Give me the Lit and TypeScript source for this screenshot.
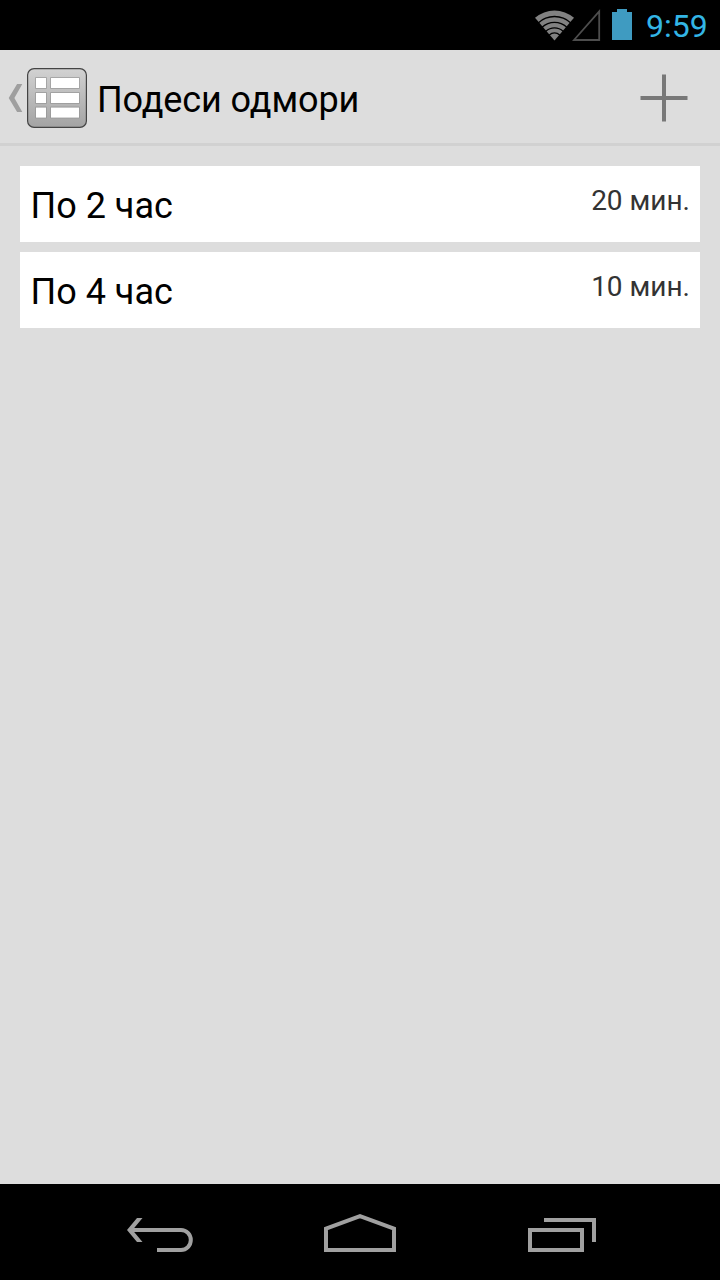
import { LitElement, html, css, svg } from "lit";
import { customElement, property } from "lit/decorators.js";

@customElement("status-bar")
class StatusBar extends LitElement {
  static styles = css`
    :host { display: flex; height: 50px; background: #000; justify-content: flex-end; }
    .icons { display: block; flex: none; }
    .clock { width: 88px; box-sizing: border-box; padding-left: 14px; font-size: 32px; line-height: 53px; color: #33b5e5; white-space: nowrap; }
  `;
  render() {
    const gaps = [24, 18.2, 12.7, 7.6];
    return html`
      <svg class="icons" width="102" height="50" viewBox="530 0 102 50">
        <path d="M554.5 40.5 L535 17.8 A30 30 0 0 1 574 17.8 Z" fill="#818181" />
        ${gaps.map((r) => svg`<path d="M${554.5 - r * 0.68} ${40.5 - r * 0.733} A${r} ${r} 0 0 1 ${554.5 + r * 0.68} ${40.5 - r * 0.733}" fill="none" stroke="#000" stroke-width="1.3" />`)}
        <path d="M574 40 L599.2 11.5 V40 Z" fill="none" stroke="#4d4d4d" stroke-width="1.8" />
        <path d="M612 12 H617 V9 H627 V12 H632 V40 H612 Z" fill="#3f9bc1" />
      </svg>
      <span class="clock">9:59</span>
    `;
  }
}

@customElement("action-bar")
class ActionBar extends LitElement {
  @property() heading = "";
  static styles = css`
    :host { display: flex; height: 96px; box-sizing: border-box; border-bottom: 3px solid #d1d1d1; background: #ddd; }
    svg { display: block; flex: none; }
    .heading { flex: 1; margin: 0; padding-left: 7px; font-weight: 400; font-size: 36px; line-height: 100px; height: 93px; letter-spacing: -0.1px; color: #000; white-space: nowrap; }
  `;
  render() {
    return html`
      <svg width="90" height="93" viewBox="0 50 90 93">
        <defs>
          <linearGradient id="g" x1="0" y1="0" x2="0" y2="1">
            <stop offset="0" stop-color="#d2d2d2" />
            <stop offset="1" stop-color="#a3a3a3" />
          </linearGradient>
        </defs>
        <path d="M17.1 84 H22.3 L14.4 98 L22.3 112 H17.1 L8.7 98 Z" fill="#9f9f9f" />
        <rect x="27.6" y="68.6" width="58.8" height="58.8" rx="6.5" fill="url(#g)" stroke="#444" stroke-width="1.2" />
        ${[77, 92, 106.6].map((y) => svg`
          <rect x="35" y=${y} width="12" height="12" rx="1" fill="#8f8f8f" fill-opacity=".6" />
          <rect x="50" y=${y} width="30" height="12" rx="1" fill="#8f8f8f" fill-opacity=".6" />
          <rect x="36" y=${y + 1} width="10" height="10" fill="#fff" />
          <rect x="51" y=${y + 1} width="28" height="10" fill="#fff" />`)}
      </svg>
      <h1 class="heading">${this.heading}</h1>
      <svg width="112" height="93" viewBox="608 50 112 93">
        <path d="M640.5 98 H687.5 M664 74.5 V121.5" stroke="#787878" stroke-width="4" />
      </svg>
    `;
  }
}

@customElement("break-row")
class BreakRow extends LitElement {
  @property() label = "";
  @property() duration = "";
  static styles = css`
    :host { display: flex; justify-content: space-between; height: 76px; box-sizing: border-box; padding: 0 10px; background: #fff; white-space: nowrap; }
    .label { font-size: 36px; line-height: 80px; padding-left: 0.5px; color: #000; }
    .duration { font-size: 28px; line-height: 70px; color: #333; }
  `;
  render() {
    return html`<span class="label">${this.label}</span><span class="duration">${this.duration}</span>`;
  }
}

@customElement("nav-bar")
class NavBar extends LitElement {
  static styles = css`
    :host { display: block; height: 96px; background: #000; }
    svg { display: block; }
  `;
  render() {
    return html`
      <svg width="720" height="96" viewBox="0 1184 720 96" fill="none" stroke="#a0a0a0" stroke-width="4">
        <path d="M131 1230 H181 A9.8 10 0 0 1 181 1250 H157" />
        <path d="M137 1218 H142.5 L132.5 1230 L142.5 1242 H137 L127 1230 Z" fill="#a0a0a0" stroke="none" />
        <path d="M326 1228.6 L360 1216.2 L394 1228.6 V1250 H326 Z" />
        <path d="M544 1220 H594 V1242 M530 1230 H582 V1250 H530 Z" />
      </svg>
    `;
  }
}

@customElement("app-root")
class AppRoot extends LitElement {
  static styles = css`
    :host { display: flex; flex-direction: column; width: 720px; height: 1280px; background: #ddd; font-family: Roboto, "Noto Sans", sans-serif; overflow: hidden; }
    .list { flex: 1; display: flex; flex-direction: column; gap: 10px; padding: 20px; }
  `;
  breaks = [
    { label: "По 2 час", duration: "20 мин." },
    { label: "По 4 час", duration: "10 мин." },
  ];
  render() {
    return html`
      <status-bar></status-bar>
      <action-bar heading="Подеси одмори"></action-bar>
      <main class="list">
        ${this.breaks.map((b) => html`<break-row label=${b.label} duration=${b.duration}></break-row>`)}
      </main>
      <nav-bar></nav-bar>
    `;
  }
}
